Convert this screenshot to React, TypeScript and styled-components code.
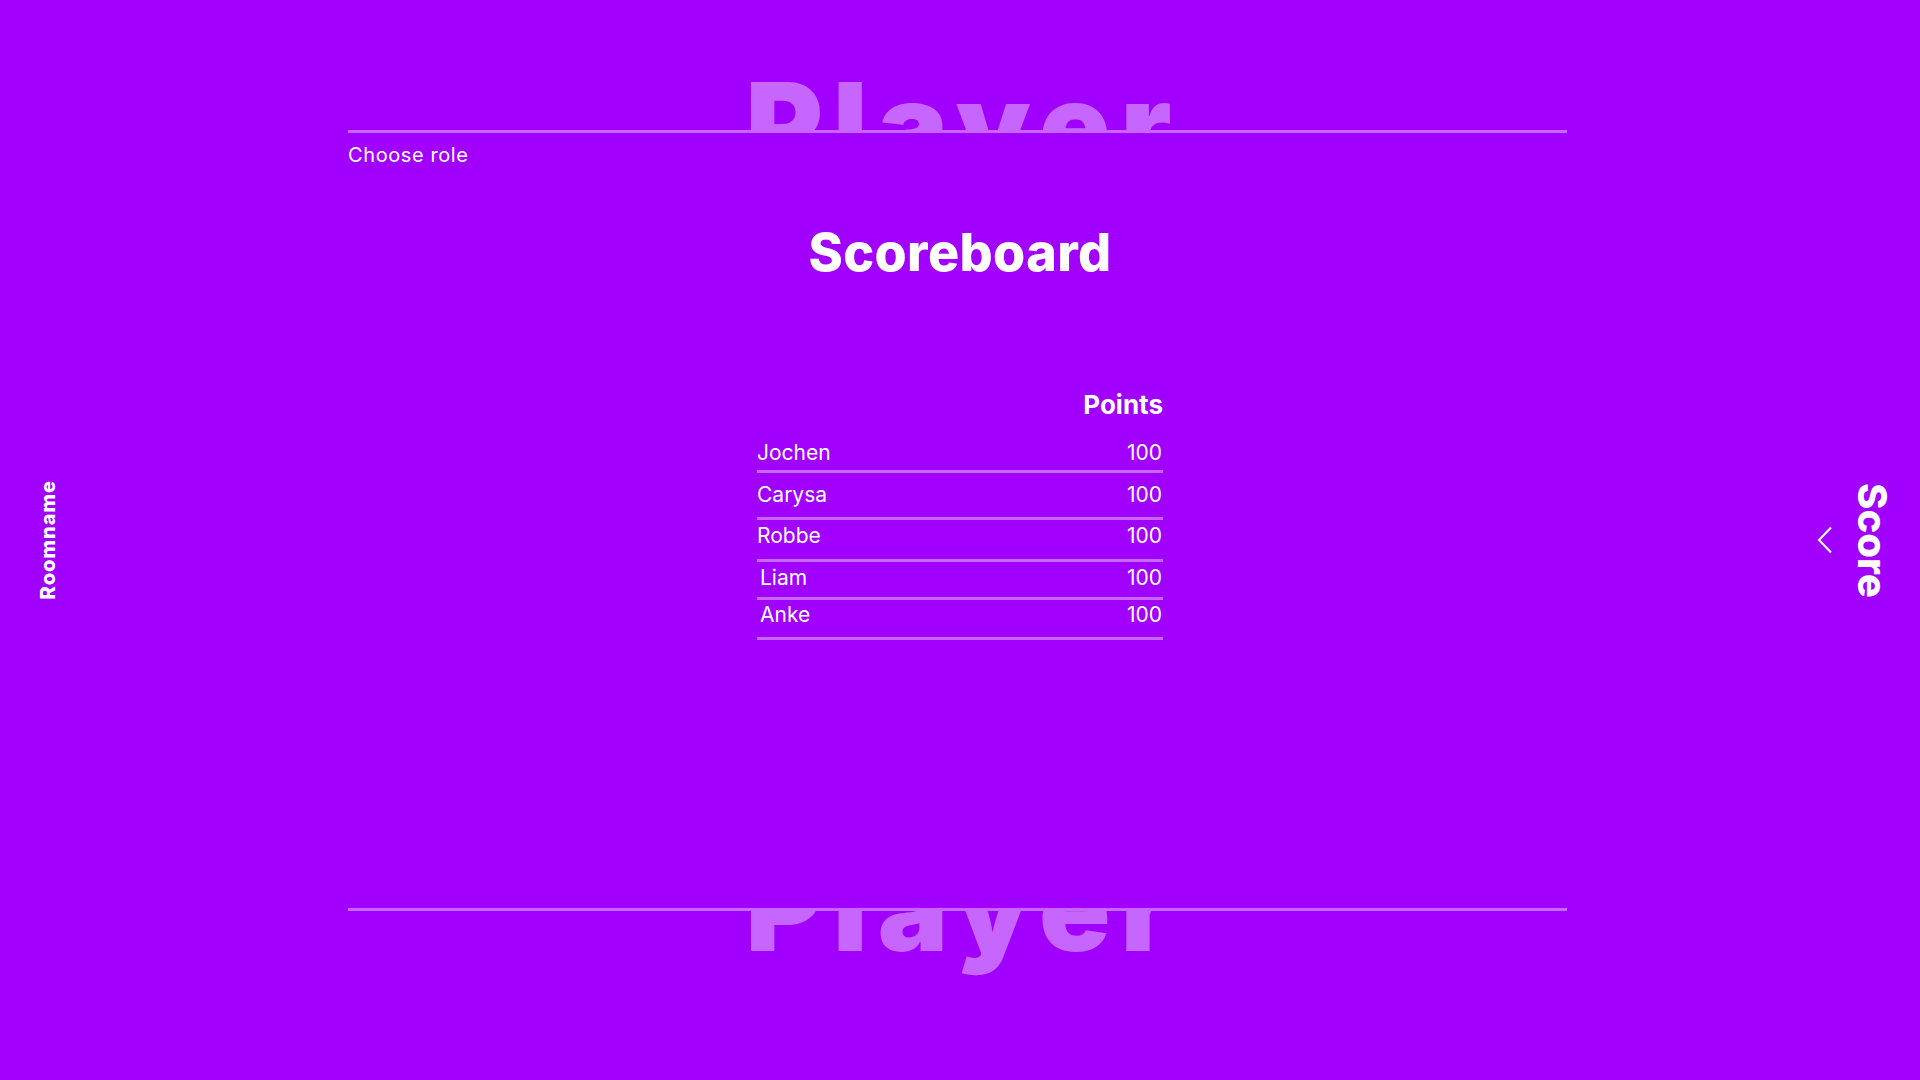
import React from 'react';
import styled, { createGlobalStyle } from 'styled-components';

const GlobalStyle = createGlobalStyle`
  html, body {
    margin: 0;
    padding: 0;
    background-color: #a100ff;
    color: #ffffff;
    font-family: 'Inter', 'Liberation Sans', sans-serif;
  }
`;

const Page = styled.div`
  height: 1080px;
  width: 1920px;
  display: grid;
  grid-template-columns: 348px 1219px 1fr;
  overflow: hidden;
`;

const LeftBar = styled.aside`
  display: flex;
  align-items: center;
  padding-left: 36px;
`;

const RoomName = styled.span`
  writing-mode: vertical-rl;
  transform: rotate(180deg);
  font-size: 20px;
  font-weight: 800;
  letter-spacing: 1px;
`;

const RightBar = styled.aside`
  display: flex;
  align-items: center;
  justify-content: flex-end;
  gap: 19px;
  padding-right: 28px;
`;

const ScoreLabel = styled.span`
  writing-mode: vertical-rl;
  font-size: 40px;
  font-weight: 800;
  line-height: 1;
`;

const Main = styled.main`
  display: flex;
  flex-direction: column;
  height: 1080px;
`;

const Wheel = styled.div<{ $bottom?: boolean }>`
  height: ${(p) => (p.$bottom ? '169px' : '130px')};
  overflow: hidden;
  display: flex;
  justify-content: center;
  padding-left: 12px;
  align-items: ${(p) => (p.$bottom ? 'flex-start' : 'flex-end')};
  flex-shrink: 0;
`;

const WheelText = styled.span<{ $bottom?: boolean }>`
  font-size: 118px;
  line-height: 118px;
  font-weight: 900;
  letter-spacing: 10px;
  color: rgba(255, 255, 255, 0.4);
  margin-bottom: ${(p) => (p.$bottom ? '0' : '-54px')};
  margin-top: ${(p) => (p.$bottom ? '-62px' : '0')};
  white-space: nowrap;
`;

const Divider = styled.div`
  height: 3px;
  background-color: rgba(255, 255, 255, 0.4);
  flex-shrink: 0;
`;

const ChooseRole = styled.p`
  margin: 10px 0 0;
  font-size: 20px;
  line-height: 24px;
  font-weight: 400;
  letter-spacing: 0.6px;
`;

const Title = styled.h1`
  margin: 54px 0 0;
  padding-left: 5px;
  text-align: center;
  font-size: 52px;
  line-height: 64px;
  font-weight: 800;
  letter-spacing: 0.4px;
`;

const Table = styled.div`
  width: 406px;
  margin: 104px 0 0 409px;
`;

const HeaderRow = styled.div`
  display: flex;
  justify-content: flex-end;
  font-size: 26px;
  line-height: 32px;
  font-weight: 700;
`;

const Row = styled.div<{ $top: number; $bottom: number; $indent: number }>`
  display: flex;
  justify-content: space-between;
  padding: ${(p) => `${p.$top}px 1px ${p.$bottom}px ${p.$indent}px`};
  border-bottom: 3px solid rgba(255, 255, 255, 0.4);
  font-size: 21px;
  line-height: 24px;
  font-weight: 400;
`;

const Spacer = styled.div`
  flex: 1;
`;

const players = [
  { name: 'Jochen', points: 100, top: 20, bottom: 5, indent: 0 },
  { name: 'Carysa', points: 100, top: 10, bottom: 10, indent: 0 },
  { name: 'Robbe', points: 100, top: 4, bottom: 11, indent: 0 },
  { name: 'Liam', points: 100, top: 4, bottom: 7, indent: 3 },
  { name: 'Anke', points: 100, top: 3, bottom: 10, indent: 3 },
];

const Chevron = () => (
  <svg width="16" height="28" viewBox="0 0 16 28" fill="none">
    <polyline points="14,1.5 2,14 14,26.5" stroke="#ffffff" strokeWidth="2" />
  </svg>
);

const App: React.FC = () => {
  return (
    <>
      <GlobalStyle />
      <Page>
        <LeftBar>
          <RoomName>Roomname</RoomName>
        </LeftBar>

        <Main>
          <Wheel>
            <WheelText>Player</WheelText>
          </Wheel>
          <Divider />
          <ChooseRole>Choose role</ChooseRole>

          <Title>Scoreboard</Title>

          <Table>
            <HeaderRow>Points</HeaderRow>
            {players.map((p) => (
              <Row key={p.name} $top={p.top} $bottom={p.bottom} $indent={p.indent}>
                <span>{p.name}</span>
                <span>{p.points}</span>
              </Row>
            ))}
          </Table>

          <Spacer />
          <Divider />
          <Wheel $bottom>
            <WheelText $bottom>Player</WheelText>
          </Wheel>
        </Main>

        <RightBar>
          <Chevron />
          <ScoreLabel>Score</ScoreLabel>
        </RightBar>
      </Page>
    </>
  );
};

export default App;
